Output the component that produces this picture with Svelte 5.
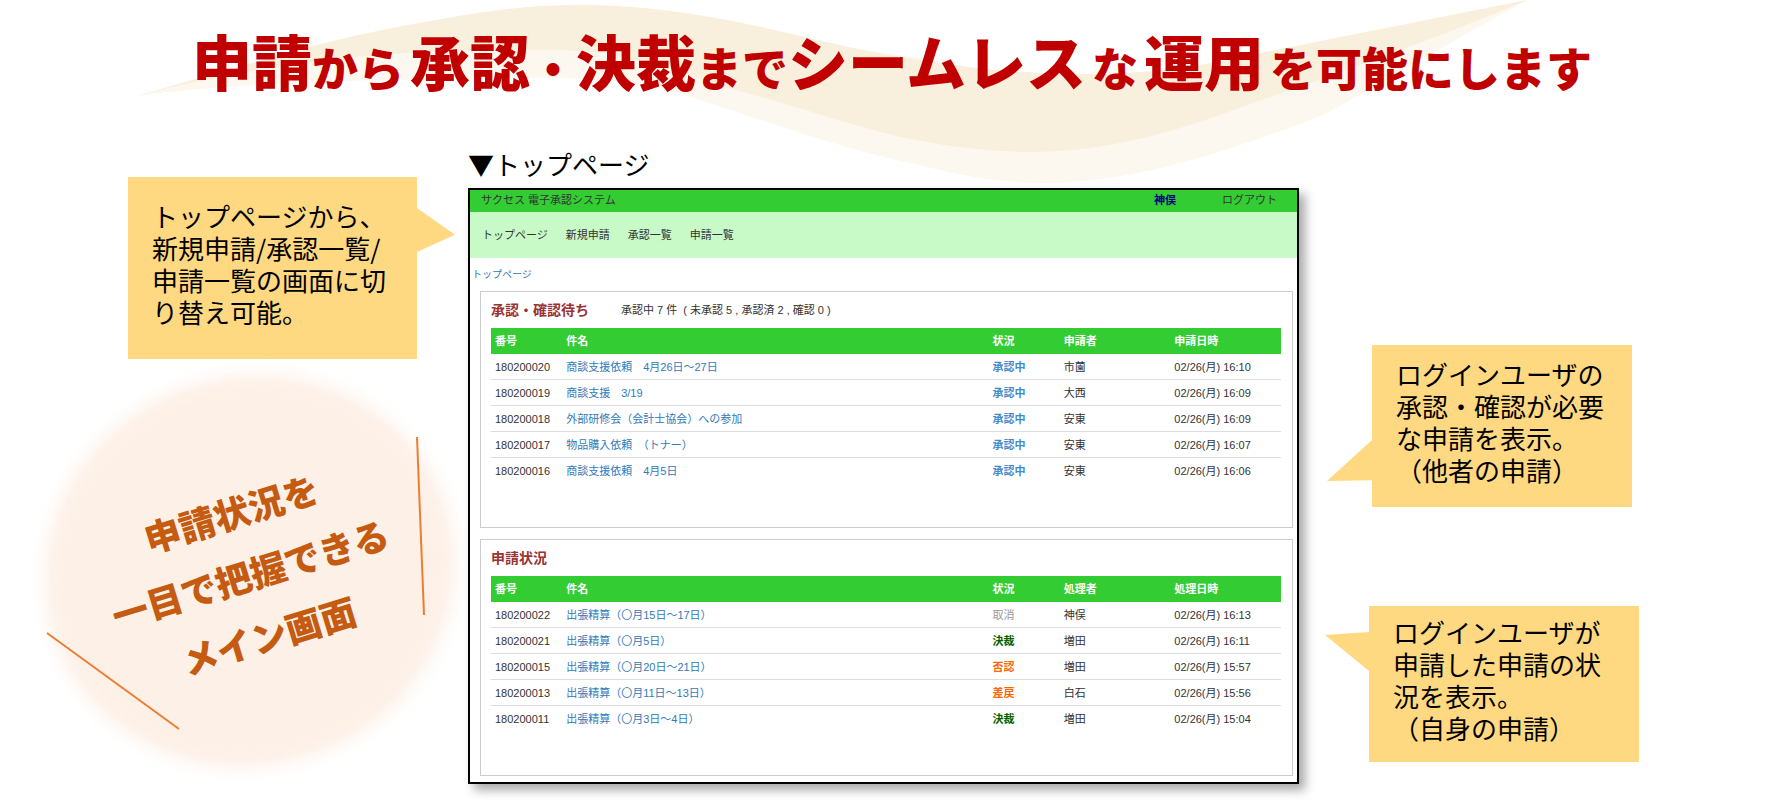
<script lang="ts">
	interface Row {
		id: string;
		title: string;
		status: string;
		kind: string;
		person: string;
		date: string;
	}

	const navItems = ['トップページ', '新規申請', '承認一覧', '申請一覧'];

	const waiting: Row[] = [
		{ id: '180200020', title: '商談支援依頼　4月26日～27日', status: '承認中', kind: 'pending', person: '市薗', date: '02/26(月) 16:10' },
		{ id: '180200019', title: '商談支援　3/19', status: '承認中', kind: 'pending', person: '大西', date: '02/26(月) 16:09' },
		{ id: '180200018', title: '外部研修会（会計士協会）への参加', status: '承認中', kind: 'pending', person: '安東', date: '02/26(月) 16:09' },
		{ id: '180200017', title: '物品購入依頼　（トナー）', status: '承認中', kind: 'pending', person: '安東', date: '02/26(月) 16:07' },
		{ id: '180200016', title: '商談支援依頼　4月5日', status: '承認中', kind: 'pending', person: '安東', date: '02/26(月) 16:06' }
	];

	const requests: Row[] = [
		{ id: '180200022', title: '出張精算（〇月15日～17日）', status: '取消', kind: 'cancelled', person: '神俣', date: '02/26(月) 16:13' },
		{ id: '180200021', title: '出張精算（〇月5日）', status: '決裁', kind: 'approved', person: '増田', date: '02/26(月) 16:11' },
		{ id: '180200015', title: '出張精算（〇月20日～21日）', status: '否認', kind: 'rejected', person: '増田', date: '02/26(月) 15:57' },
		{ id: '180200013', title: '出張精算（〇月11日～13日）', status: '差戻', kind: 'rejected', person: '白石', date: '02/26(月) 15:56' },
		{ id: '180200011', title: '出張精算（〇月3日～4日）', status: '決裁', kind: 'approved', person: '増田', date: '02/26(月) 15:04' }
	];
</script>

{#snippet listTable(rows: Row[], personLabel: string, dateLabel: string)}
	<table>
		<thead>
			<tr>
				<th class="col-id">番号</th>
				<th class="col-title">件名</th>
				<th class="col-status">状況</th>
				<th class="col-person">{personLabel}</th>
				<th class="col-date">{dateLabel}</th>
			</tr>
		</thead>
		<tbody>
			{#each rows as row}
				<tr>
					<td>{row.id}</td>
					<td><a href="#{row.id}">{row.title}</a></td>
					<td class="status {row.kind}">{row.status}</td>
					<td>{row.person}</td>
					<td>{row.date}</td>
				</tr>
			{/each}
		</tbody>
	</table>
{/snippet}

<div class="slide">
	<svg class="swoosh" viewBox="0 0 1784 190" aria-hidden="true">
		<path
			fill="#fcf8ef"
			d="M136 96C220 84 360 80 477 78C560 77 620 78 666 90C740 110 830 148 920 165C965 177 1005 183 1047 183C1100 182 1140 173 1182 163C1240 146 1280 132 1323 115C1370 90 1430 54 1527 0C1440 20 1350 40 1261 63C1180 90 1140 90 1086 84C960 70 860 40 732 40C500 30 300 50 136 96Z"
		/>
		<path
			fill="#f8efdc"
			d="M136 96C200 78 250 63 309 47C360 34 390 28 436 20C490 10 530 5 579 5C640 5 690 13 732 21C800 34 850 50 920 60C980 70 1035 74 1086 74C1150 74 1205 66 1261 53C1350 35 1440 17 1527 0C1470 24 1420 43 1368 62C1330 76 1300 87 1261 100C1220 115 1175 132 1125 142C1090 149 1060 152 1024 152C980 151 940 145 900 137C840 122 790 104 732 89C700 80 680 70 656 65C620 55 590 50 554 50C420 47 280 58 136 96Z"
		/>
	</svg>

	<h1>
		<span class="big">申請</span>から<span class="big gap">承認</span>・<span class="big">決裁</span>まで<span class="big">シームレス</span><span class="gap">な</span><span class="big gap">運用</span><span class="gap">を可能にします</span>
	</h1>

	<main>
		<div class="left">
			<p class="callout to-nav">トップページから、<br />新規申請/承認一覧/<br />申請一覧の画面に切<br />り替え可能。</p>
			<div class="message">
				<svg viewBox="0 0 468 428" aria-hidden="true">
					<ellipse class="glow" cx="250" cy="212" rx="207" ry="195" transform="rotate(-20 250 212)" />
					<path class="stroke" d="M417 78L424 256M47 274L179 370" />
				</svg>
				<p>申請状況を<br />一目で把握できる<br />メイン画面</p>
			</div>
		</div>

		<section class="center">
			<h2>▼トップページ</h2>
			<div class="window">
				<header class="topbar">
					<span>サクセス 電子承認システム</span>
					<div class="account">
						<strong>神俣</strong>
						<a href="#logout">ログアウト</a>
					</div>
				</header>
				<nav>
					{#each navItems as item}
						<a href="#{item}">{item}</a>
					{/each}
				</nav>
				<a class="breadcrumb" href="#top">トップページ</a>

				<div class="panels">
					<section class="panel">
						<div class="panel-head">
							<h3>承認・確認待ち</h3>
							<span>承認中 7 件&nbsp; ( 未承認 5 , 承認済 2 , 確認 0 )</span>
						</div>
						{@render listTable(waiting, '申請者', '申請日時')}
					</section>
					<section class="panel">
						<div class="panel-head">
							<h3>申請状況</h3>
						</div>
						{@render listTable(requests, '処理者', '処理日時')}
					</section>
				</div>
			</div>
		</section>

		<div class="right">
			<p class="callout to-waiting">ログインユーザの<br />承認・確認が必要<br />な申請を表示。<br />（他者の申請）</p>
			<p class="callout to-requests">ログインユーザが<br />申請した申請の状<br />況を表示。<br />（自身の申請）</p>
		</div>
	</main>
</div>

<style>
	:global(body) {
		margin: 0;
		background: #fff;
	}

	.slide {
		position: relative;
		z-index: 0;
		min-height: 100vh;
		overflow: hidden;
		font-family: 'Noto Sans CJK JP', sans-serif;
		color: #000;
	}

	h1,
	h2,
	h3,
	p {
		margin: 0;
	}

	a {
		color: inherit;
		text-decoration: none;
	}

	.swoosh {
		position: absolute;
		top: 0;
		left: 0;
		z-index: -1;
		width: 100%;
	}

	h1 {
		height: 140px;
		box-sizing: border-box;
		padding-top: 12px;
		font-size: 46px;
		line-height: 96px;
		font-weight: 900;
		text-align: center;
		white-space: nowrap;
		color: #c00000;
	}

	h1 .big {
		font-size: 60px;
	}

	h1 .gap {
		margin-left: 6px;
	}

	main {
		display: grid;
		grid-template-columns: 468fr 831fr 485fr;
		align-items: start;
	}

	.left {
		padding-top: 37px;
	}

	.callout {
		position: relative;
		display: flex;
		align-items: center;
		box-sizing: border-box;
		padding: 0 0 8px 24px;
		background: #ffd982;
		font-size: 26px;
		line-height: 32px;
		white-space: nowrap;
	}

	.callout::after {
		content: '';
		position: absolute;
		background: inherit;
	}

	.to-nav {
		width: 289px;
		min-height: 182px;
		margin-left: 128px;
	}

	.to-nav::after {
		top: 31px;
		left: 100%;
		width: 38px;
		height: 44px;
		clip-path: polygon(0 0, 100% 61%, 0 100%);
	}

	.to-waiting {
		width: 260px;
		min-height: 162px;
		margin-left: 3px;
	}

	.to-waiting::after {
		top: 95px;
		right: 100%;
		width: 45px;
		height: 41px;
		clip-path: polygon(100% 0, 0 100%, 100% 98%);
	}

	.to-requests {
		width: 270px;
		min-height: 156px;
	}

	.to-requests::after {
		top: 26px;
		right: 100%;
		width: 44px;
		height: 39px;
		clip-path: polygon(100% 0, 0 8%, 100% 100%);
	}

	/* tilted message on the soft circle */
	.message {
		display: grid;
		place-items: center;
	}

	.message > * {
		grid-area: 1 / 1;
	}

	.message svg {
		width: 100%;
		overflow: visible;
	}

	.glow {
		fill: #fdf0e7;
		filter: blur(8px);
	}

	.stroke {
		fill: none;
		stroke: #ed7d31;
		stroke-width: 2;
	}

	.message p {
		margin-left: 32px;
		font-size: 36px;
		line-height: 64px;
		font-weight: 900;
		text-align: center;
		white-space: nowrap;
		color: #c55a11;
		transform: rotate(-17deg);
	}

	h2 {
		font-size: 26px;
		line-height: 48px;
		font-weight: 400;
	}

	.window {
		position: relative;
		border: 2px solid #000;
		background: #fff;
		box-shadow: 6px 6px 10px rgba(0, 0, 0, 0.35);
		font-family: 'Liberation Sans', 'Noto Sans CJK JP', sans-serif;
		font-size: 11px;
		line-height: 16px;
		color: #333;
	}

	.topbar {
		display: flex;
		justify-content: space-between;
		padding: 2px 20px 4px 11px;
		background: #33cc33;
	}

	.account {
		display: flex;
		gap: 46px;
	}

	.account strong {
		color: #000080;
	}

	nav {
		display: flex;
		gap: 18px;
		padding: 15px 12px;
		background: #c8fac8;
	}

	.breadcrumb {
		display: block;
		padding: 9px 2px 8px;
		font-size: 10px;
		color: #337ab7;
	}

	.panels {
		display: flex;
		flex-direction: column;
		gap: 11px;
		padding: 0 4px 6px 10px;
	}

	.panel {
		min-height: 237px;
		box-sizing: border-box;
		padding: 0 11px 0 10px;
		border: 1px solid #ccc;
	}

	.panel-head {
		display: flex;
		align-items: center;
		gap: 32px;
		height: 36px;
	}

	h3 {
		font-size: 14px;
		font-weight: 700;
		color: #993333;
	}

	table {
		width: 100%;
		table-layout: fixed;
		border-collapse: collapse;
	}

	th,
	td {
		height: 25px;
		padding: 0 4px;
		text-align: left;
		white-space: nowrap;
	}

	th {
		height: 26px;
		background: #33cc33;
		color: #fff;
	}

	tbody tr + tr td {
		border-top: 1px solid #ddd;
	}

	td a {
		color: #337ab7;
	}

	.col-id,
	.col-status {
		width: 8%;
	}

	.col-title {
		width: 53%;
	}

	.col-person,
	.col-date {
		width: 13%;
	}

	.status {
		font-weight: 700;
	}

	.pending {
		color: #428bca;
	}

	.cancelled {
		color: #999;
		font-weight: 400;
	}

	.approved {
		color: #006400;
	}

	.rejected {
		color: #ff6600;
	}

	.right {
		display: flex;
		flex-direction: column;
		gap: 99px;
		padding: 205px 0 0 70px;
	}
</style>
